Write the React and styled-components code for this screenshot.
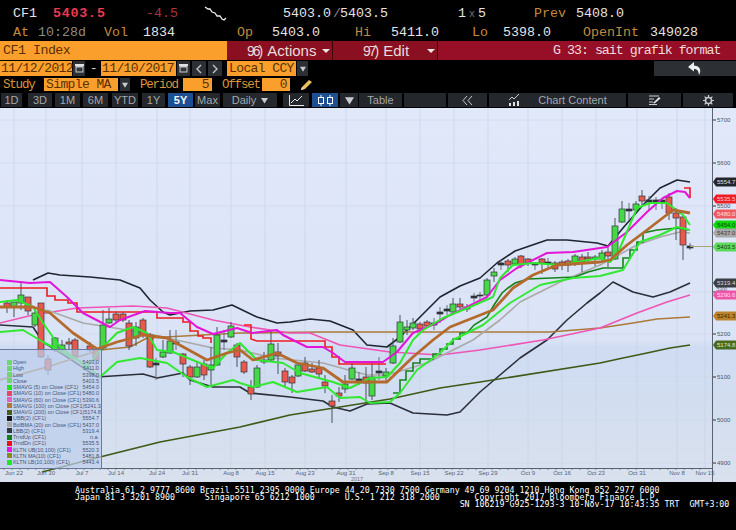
import React from 'react';
import styled, { createGlobalStyle } from 'styled-components';

const GlobalStyle = createGlobalStyle`
  html, body { margin: 0; padding: 0; background: #000; }
  body { width: 736px; height: 530px; overflow: hidden; font-family: "Liberation Mono", monospace; }
`;

const ORANGE = '#fb9f2c';

const Page = styled.div`
  width: 736px;
  height: 530px;
  display: flex;
  flex-direction: column;
  background: #000;
`;

const Row = styled.div`
  display: flex;
  align-items: center;
  box-sizing: border-box;
  height: ${p => p.$h}px;
  flex: none;
  padding-left: ${p => p.$pad || 0}px;
  padding-top: ${p => p.$top || 0}px;
  margin-bottom: ${p => p.$mb || 0}px;
`;

const Quote = styled.span`
  flex: none;
  width: ${p => p.$w}px;
  font-size: 13.3px;
  color: ${p => p.$c || '#e4e4e4'};
  font-weight: ${p => (p.$bold ? 700 : 400)};
  letter-spacing: ${p => p.$ls || 0}px;
  white-space: pre;
`;

const Times = styled.span`
  color: #777;
  font-size: 10px;
`;

const TitleBar = styled.div`
  flex: none;
  display: flex;
  align-items: center;
  width: ${p => p.$w}px;
  height: 19px;
  box-sizing: border-box;
  padding-left: ${p => p.$pad || 0}px;
  background: ${p => p.$bg};
  color: ${p => p.$c};
  font-size: 13.3px;
  letter-spacing: ${p => p.$ls || 0}px;
  white-space: pre;
  border-right: ${p => (p.$edge ? '1px solid #3a0008' : 'none')};
`;

const MenuNum = styled.span`
  font-family: "Liberation Sans", sans-serif;
  font-size: 14px;
  letter-spacing: -2px;
  color: #e8dcdc;
  margin-right: 6px;
`;

const MenuLabel = styled.span`
  font-family: "Liberation Sans", sans-serif;
  font-size: 15px;
  color: #e8dcdc;
`;

const Caret = styled.span`
  width: 0;
  height: 0;
  margin-left: ${p => p.$ml || 6}px;
  border-left: 4px solid transparent;
  border-right: 4px solid transparent;
  border-top: 4px solid ${p => p.$c || '#e8e8e8'};
`;

const Input = styled.div`
  flex: none;
  display: flex;
  align-items: center;
  justify-content: ${p => (p.$right ? 'flex-end' : 'flex-start')};
  box-sizing: border-box;
  width: ${p => p.$w}px;
  height: ${p => p.$h || 15}px;
  margin-left: ${p => p.$ml || 0}px;
  padding: 0 3px 0 ${p => p.$pl || 1}px;
  background: ${ORANGE};
  color: #5a3000;
  font-size: 13px;
  letter-spacing: -0.6px;
  white-space: pre;
`;

const Label = styled.span`
  flex: none;
  width: ${p => p.$w}px;
  margin-left: ${p => p.$ml || 0}px;
  color: ${p => p.$c || '#d9973a'};
  font-size: 12.5px;
  letter-spacing: -1.2px;
`;

const IconBtn = styled.div`
  flex: none;
  display: flex;
  align-items: center;
  justify-content: center;
  width: ${p => p.$w}px;
  height: ${p => p.$h || 15}px;
  margin-left: ${p => p.$ml || 0}px;
  background: #2c2f33;
  color: #cfd3d8;
`;

const Tool = styled.div`
  flex: none;
  display: flex;
  align-items: center;
  justify-content: center;
  gap: 5px;
  box-sizing: border-box;
  width: ${p => p.$w}px;
  height: 14px;
  margin-left: ${p => p.$ml || 0}px;
  background: ${p => (p.$on ? '#1d4f92' : '#24272b')};
  color: ${p => (p.$on ? '#f4f6fa' : '#a3a8ad')};
  font-family: "Liberation Sans", sans-serif;
  font-size: 11px;
  font-weight: ${p => (p.$on ? 700 : 400)};
`;

const ChartArea = styled.div`
  position: relative;
  flex: none;
  width: 736px;
  height: 374px;
  background: linear-gradient(180deg, #e0e8fa 0%, #dbe4f6 62%, #cfdcf3 64%, #d3deef 82%, #d9e1ee 100%);
  overflow: hidden;
`;

const Plot = styled.svg`
  display: block;
`;

const Legend = styled.div`
  position: absolute;
  left: 0;
  top: 241px;
  width: 102px;
  height: 120px;
  box-sizing: border-box;
  padding: 9px 2px 0 7px;
  background: rgba(190, 207, 236, 0.72);
  border: 1px solid #6a7a98;
  border-left: none;
`;

const LegendRow = styled.div`
  display: flex;
  align-items: center;
  height: 6.25px;
  font-family: "Liberation Sans", sans-serif;
  font-size: 5.4px;
  color: #44557a;
  white-space: pre;
`;

const Swatch = styled.span`
  flex: none;
  width: 5px;
  height: 5px;
  margin-right: 1px;
  background: ${p => p.$c};
`;

const LegendValue = styled.span`
  margin-left: auto;
`;

const Footer = styled.div`
  flex: 1;
  box-sizing: border-box;
  padding: 5px 0 0 75px;
  color: #fff;
  font-family: "DejaVu Sans Mono", monospace;
  font-size: 8.3px;
  line-height: 7px;
  white-space: pre;
`;

const pts = a => a.map(p => p.join(',')).join(' ');

const lines = [
  // upper band
  { c: '#1f2430', w: 1.6, p: [[33,280],[48,273],[60,275],[90,277],[120,280],[140,288],[150,300],[163,312],[170,315],[190,311],[213,310],[232,305],[257,317],[277,323],[290,322],[310,319],[330,321],[353,330],[367,345],[387,347],[400,337],[420,317],[440,297],[460,286],[480,278],[497,263],[515,251],[547,240],[567,240],[597,243],[608,246],[623,228],[643,205],[660,188],[677,180],[690,182]] },
  // lower band
  { c: '#2b2f3a', w: 1.6, p: [[0,325],[33,327],[43,342],[67,357],[97,377],[143,374],[157,378],[183,373],[190,380],[213,387],[240,387],[250,393],[290,397],[323,401],[333,407],[350,411],[367,404],[390,403],[413,413],[447,415],[460,412],[480,392],[500,375],[520,358],[547,340],[567,320],[587,303],[600,293],[613,282],[633,292],[653,297],[670,292],[690,283]] },
  // 200
  { c: '#3d5a16', w: 1.7, p: [[42,472],[100,457],[160,442],[240,427],[290,415],[340,407],[390,399],[440,388],[480,382],[600,363],[623,358],[647,353],[670,348],[690,345]] },
  // 100
  { c: '#ab7a3a', w: 1.7, p: [[0,380],[47,367],[100,350],[130,347],[147,338],[240,333],[320,332],[400,332],[500,332],[550,332],[600,328],[633,323],[657,319],[690,317]] },
  // 60
  { c: '#ee55b4', w: 1.7, p: [[0,323],[33,315],[77,308],[133,306],[167,308],[213,320],[250,327],[290,333],[310,333],[340,345],[390,352],[440,355],[480,350],[543,340],[600,328],[637,313],[667,302],[690,295]] },
  // middle band
  { c: '#aaa9a8', w: 1.6, p: [[47,310],[83,323],[140,332],[213,348],[240,350],[273,358],[323,363],[367,375],[387,375],[427,363],[473,340],[500,320],[520,302],[560,282],[600,265],[637,245],[660,237],[680,232],[690,233]] },
  // upper kltn
  { c: '#e414d8', w: 2, p: [[0,280],[30,283],[50,282],[67,297],[83,313],[110,327],[120,320],[145,311],[170,313],[180,313],[197,327],[213,334],[237,328],[252,333],[277,330],[283,335],[307,347],[323,347],[333,353],[345,362],[383,362],[397,352],[413,333],[437,323],[450,315],[467,307],[487,297],[500,280],[517,268],[547,253],[573,252],[607,247],[627,232],[647,212],[663,198],[677,191],[685,192],[690,198]] },
  // sma 5
  { c: '#2ee82e', w: 2, p: [[0,302],[17,300],[33,307],[43,323],[60,347],[87,367],[100,350],[117,333],[133,327],[147,333],[157,350],[173,352],[200,363],[213,368],[227,353],[240,343],[257,360],[283,363],[300,373],[333,382],[350,388],[370,378],[387,377],[400,363],[413,340],[423,330],[443,318],[470,307],[493,297],[500,278],[513,265],[533,263],[560,265],[600,258],[610,262],[617,255],[637,208],[650,203],[667,203],[683,215],[690,225]] },
  // lower kltn
  { c: '#32e832', w: 2, p: [[0,332],[23,330],[43,342],[83,363],[100,377],[117,362],[140,358],[167,363],[187,377],[207,387],[233,380],[240,383],[253,387],[273,382],[297,392],[327,387],[340,398],[360,397],[370,403],[390,402],[400,393],[417,370],[440,353],[453,340],[483,325],[510,303],[540,285],[573,278],[600,276],[623,270],[640,242],[660,235],[677,227],[690,230]] },
  // brown kltn mid
  { c: '#b46a2c', w: 2.8, p: [[0,307],[33,307],[50,313],[73,333],[97,349],[117,342],[143,335],[167,338],[207,360],[227,353],[240,350],[253,360],[277,353],[297,363],[323,368],[343,382],[387,382],[413,357],[433,340],[450,327],[493,310],[513,288],[533,275],[557,265],[600,262],[610,260],[627,245],[647,230],[673,210],[690,213]] },
];

const steps = [
  { c: '#14821c', w: 1.6, p: [[393,393],[400,393],[400,380],[406,380],[406,371],[413,371],[413,363],[420,363],[420,359],[433,359],[433,354],[440,354],[440,349],[447,349],[447,344],[453,344],[453,339],[460,339],[460,333],[467,333],[474,325],[487,317],[494,305],[502,293],[508,288],[515,283],[528,279],[575,277],[588,272],[603,268],[623,268],[623,258],[630,258],[630,250],[637,250],[637,242],[643,242],[643,233],[657,230],[677,228],[688,230]] },
  { c: '#ee1c20', w: 1.6, p: [[0,288],[47,288],[47,296],[55,296],[55,300],[68,300],[68,303],[77,303],[77,312],[157,312],[157,318],[183,318],[183,322],[190,322],[190,331],[198,331],[198,336],[203,336],[203,338],[211,338],[211,343]] },
  { c: '#ee1c20', w: 1.6, p: [[244,325],[251,325],[251,339],[257,341],[325,341],[325,347],[332,347],[332,357],[339,357],[339,364],[386,364]] },
  { c: '#ee1c20', w: 1.6, p: [[684,188],[690,188],[690,198]] },
];

// x, bodyTop, bodyBottom, wickTop, wickBottom, colour (r/g/t for a doji tick)
const candles = [
  [7,303,307,300,313,'r'],[14,302,307,302,317,'g'],[21,295,303,283,310,'g'],[28,297,311,297,315,'r'],[35,313,325,310,327,'g'],[41,303,357,303,358,'r'],
  [48,359,370,355,375,'r'],[55,338,350,337,352,'g'],[62,345,350,340,352,'g'],[69,342,344,338,350,'r'],[75,340,356,338,358,'r'],[90,346,350,342,352,'r'],
  [96,350,360,350,370,'r'],[103,325,348,310,350,'g'],[109,319,323,308,324,'g'],[116,314,320,312,322,'r'],[123,314,320,312,322,'r'],[129,323,346,320,350,'r'],
  [136,327,338,322,346,'g'],[143,320,335,318,338,'r'],[150,335,367,333,368,'r'],[156,363,365,358,380,'t'],[163,352,357,340,358,'g'],[170,341,353,330,354,'g'],
  [176,342,344,330,350,'t'],[183,354,364,353,377,'r'],[190,367,377,365,385,'r'],[197,367,377,362,378,'g'],[204,364,375,360,380,'r'],[211,365,370,347,387,'g'],
  [217,335,365,327,366,'g'],[224,340,342,330,350,'t'],[231,326,337,322,338,'g'],[237,345,357,343,367,'r'],[244,362,372,360,374,'r'],[251,387,394,380,400,'r'],
  [257,368,387,365,388,'g'],[264,360,362,352,364,'g'],[271,344,360,330,362,'g'],[278,352,356,343,374,'r'],[285,371,382,368,387,'r'],[292,377,383,375,393,'r'],
  [298,365,376,362,377,'g'],[305,363,371,357,372,'r'],[312,369,372,363,373,'r'],[319,368,374,360,378,'r'],[325,382,386,375,393,'r'],[332,401,406,395,423,'r'],
  [339,393,396,387,402,'r'],[345,384,389,375,393,'g'],[352,368,379,362,380,'g'],[359,379,381,372,385,'t'],[366,377,383,367,402,'r'],[372,377,396,363,400,'g'],
  [379,371,373,357,380,'t'],[386,372,376,368,383,'g'],[393,346,363,338,364,'g'],[400,322,342,315,343,'g'],[407,327,330,320,335,'g'],[413,323,328,318,330,'g'],
  [420,324,329,322,331,'r'],[427,322,326,320,328,'r'],[434,323,325,318,330,'t'],[440,312,314,307,323,'t'],[447,309,311,305,315,'t'],[453,304,312,298,313,'g'],
  [460,304,307,298,309,'r'],[467,307,309,304,312,'g'],[474,296,298,293,302,'t'],[480,295,296,292,300,'t'],[487,280,295,278,296,'g'],[494,272,276,268,282,'g'],
  [501,263,265,260,270,'t'],[508,261,265,259,272,'r'],[515,259,264,257,266,'g'],[521,256,265,255,268,'r'],[528,259,263,258,266,'r'],[535,263,265,262,270,'t'],
  [542,259,263,258,274,'r'],[548,262,264,258,270,'t'],[555,263,269,261,272,'r'],[562,262,265,260,270,'r'],[568,261,265,259,272,'r'],[575,256,263,254,266,'g'],
  [582,257,262,254,272,'r'],[588,257,259,252,264,'r'],[595,257,259,255,266,'g'],[602,253,259,250,262,'g'],[608,252,256,247,267,'r'],[615,226,259,218,260,'g'],
  [622,209,222,201,223,'g'],[629,209,211,203,220,'t'],[636,204,210,201,211,'g'],[642,196,201,190,205,'r'],[649,200,202,196,210,'t'],[656,200,202,197,210,'t'],
  [662,200,202,199,209,'t'],[669,197,213,193,220,'r'],[676,213,218,208,240,'r'],[683,217,245,216,260,'r'],[690,246,248,243,250,'t'],
];

const candleFill = { r: '#e8584c', g: '#46d846', t: '#2a2e38' };

const ticks = [
  ['Jun 22',14],['Jun 30',46],['Jul 7',82],['Jul 14',116],['Jul 24',157],['Jul 31',190],['Aug 8',231],['Aug 15',265],['Aug 23',305],['Aug 31',346],
  ['Sep 8',386],['Sep 15',420],['Sep 22',454],['Sep 29',488],['Oct 9',528],['Oct 16',562],['Oct 23',596],['Oct 31',637],['Nov 8',677],['Nov 15',705],
];

const levels = [[5700,120,120],[5600,163,163],[5500,206,206],[5300,292,288.5],[5200,334,334],[5100,377,377],[5000,420,420],[4900,463,463]];

const tags = [
  ['5554.7',182,'#23262c','#e0e0e0'],['5535.5',199,'#f01c24','#ffd0d0'],['5480.0',214,'#ee5a60','#ffe0e0'],['5454.0',225,'#10d810','#0c4a0c'],
  ['5437.0',233,'#a8a8a8','#3a3a3a'],['5403.5',247,'#5cd85c','#123c12'],['5319.4',283,'#3a3e44','#d8d8d8'],['5290.6',295,'#ee55a8','#ffe0f0'],
  ['5241.3',316,'#b9832e','#3c2600'],['5174.8',345,'#4a6a1c','#e0e8c0'],
];

const legendRows = [
  ['#6ad86a','Open','5403.0'],['#6ad86a','High','5411.0'],['#6ad86a','Low','5398.0'],['#6ad86a','Close','5403.5'],
  ['#18e818','SMAVG (5) on Close (CF1)','5454.0'],['#ee4460','SMAVG (10) on Close (CF1)','5480.0'],['#e060c0','SMAVG (60) on Close (CF1)','5390.6'],
  ['#b07a30','SMAVG (100) on Close (CF1)','5241.3'],['#4a5a18','SMAVG (200) on Close (CF1)','5174.8'],['#14161c','UBB(2) (CF1)','5554.7'],
  ['#a8a8a8','BolBMA (20) on Close (CF1)','5437.0'],['#343840','LBB(2) (CF1)','5319.4'],['#14801c','TrndUp (CF1)','n.a.'],
  ['#ee1010','TrndDn (CF1)','5535.5'],['#f010e8','KLTN UB(10,100) (CF1)','5520.3'],['#8a8a20','KLTN MA(10) (CF1)','5481.8'],['#20e820','KLTN LB(10,100) (CF1)','5443.4'],
];

const Calendar = () => (
  <svg width="9" height="9" viewBox="0 0 9 9">
    <rect x="0.5" y="1.5" width="8" height="7" fill="#c8ccd0" />
    <rect x="1.5" y="3.5" width="6" height="4" fill="#33373b" />
    <rect x="0" y="0" width="9" height="2" fill="#e0e2e4" />
  </svg>
);

const Tri = ({ c = '#c8ccd2', s = 8 }) => (
  <svg width={s} height={s} viewBox="0 0 8 8"><path d="M0 1h8L4 7.5z" fill={c} /></svg>
);

const Chev = ({ d }) => (
  <svg width="8" height="10" viewBox="0 0 8 10">
    <path d={d} fill="none" stroke="#c0c4c8" strokeWidth="1.4" />
  </svg>
);

const Quotes = () => (
  <>
    <Row $h={23} $pad={13} $top={3}>
      <Quote $w={40}>CF1</Quote>
      <Quote $w={93} $c="#ec3a52" $bold $ls={0.8}>5403.5</Quote>
      <Quote $w={57} $c="#a8343e">-4.5</Quote>
      <Quote $w={80}>
        <svg width="24" height="16" viewBox="203 3 24 16" style={{ display: 'block' }}>
          <polyline points="205,5 208,7 210,7 212,10 215,11 217,14 220,14 222,17 224,18 226,16" fill="none" stroke="#eee" strokeWidth="1.3" />
        </svg>
      </Quote>
      <Quote $w={50}>5403.0</Quote>
      <Quote $w={7} $c="#888">/</Quote>
      <Quote $w={118}>5403.5</Quote>
      <Quote $w={76} $ls={3}>1<Times>x</Times>5</Quote>
      <Quote $w={42} $c="#c48a3c">Prev</Quote>
      <Quote $w={60}>5408.0</Quote>
    </Row>
    <Row $h={18} $pad={13}>
      <Quote $w={25} $c="#c48a3c">At</Quote>
      <Quote $w={66} $c="#8a8a8a">10:28d</Quote>
      <Quote $w={39} $c="#c48a3c">Vol</Quote>
      <Quote $w={94}>1834</Quote>
      <Quote $w={35} $c="#c48a3c">Op</Quote>
      <Quote $w={83}>5403.0</Quote>
      <Quote $w={36} $c="#c48a3c">Hi</Quote>
      <Quote $w={81}>5411.0</Quote>
      <Quote $w={31} $c="#c48a3c">Lo</Quote>
      <Quote $w={80}>5398.0</Quote>
      <Quote $w={67} $c="#c48a3c">OpenInt</Quote>
      <Quote $w={60}>349028</Quote>
    </Row>
  </>
);

const Controls = () => (
  <>
    <Row $h={19} $mb={1}>
      <TitleBar $w={227} $pad={3} $bg={ORANGE} $c="#5a3000" $ls={-0.5}>CF1 Index</TitleBar>
      <TitleBar $w={106} $pad={20} $bg="#8a0f20" $c="#e8dcdc" $edge>
        <MenuNum>96)</MenuNum><MenuLabel>Actions</MenuLabel><Caret />
      </TitleBar>
      <TitleBar $w={105} $pad={30} $bg="#8a0f20" $c="#e8dcdc" $edge>
        <MenuNum>97)</MenuNum><MenuLabel>Edit</MenuLabel><Caret $ml={18} />
      </TitleBar>
      <TitleBar $w={298} $pad={115} $bg="#960f26" $c="#f0d8dc" $ls={-1}>G 33: sait grafik format</TitleBar>
    </Row>
    <Row $h={15} $mb={2}>
      <Input $w={72}>11/12/2012</Input>
      <IconBtn $w={12} $ml={1}><Calendar /></IconBtn>
      <Label $w={11} $ml={5} $c="#d8d8d8">-</Label>
      <Input $w={75}>11/10/2017</Input>
      <IconBtn $w={13} $ml={1}><Calendar /></IconBtn>
      <IconBtn $w={14} $ml={2}><Chev d="M6 1L2 5l4 4" /></IconBtn>
      <IconBtn $w={14} $ml={2}><Chev d="M2 1l4 4-4 4" /></IconBtn>
      <Input $w={69} $ml={5} $pl={2}>Local CCY</Input>
      <IconBtn $w={11} $ml={1}><Tri s={6} /></IconBtn>
      <IconBtn $w={82} $ml={346}>
        <svg width="14" height="13" viewBox="0 0 14 13">
          <path d="M6 0L0 5l6 4.500V7c3 0 4.500 1.500 5 6 2-3 2.500-9-5-9.500z" fill="#eceef0" />
        </svg>
      </IconBtn>
    </Row>
    <Row $h={13} $mb={2}>
      <Label $w={41} $ml={3}>Study</Label>
      <Input $w={74} $h={13} $pl={2}>Simple MA</Input>
      <IconBtn $w={10} $h={13} $ml={2}><Tri s={6} /></IconBtn>
      <Label $w={43} $ml={10}>Period</Label>
      <Input $w={29} $h={13} $right>5</Input>
      <Label $w={40} $ml={10}>Offset</Label>
      <Input $w={28} $h={13} $right>0</Input>
      <svg width="14" height="12" viewBox="0 0 14 12" style={{ marginLeft: 10 }}>
        <path d="M1 11l1-3 7-7 3 2-7 7z" fill="#e8c060" />
        <path d="M1 11l1-3 2 2z" fill="#f0e0c0" />
      </svg>
    </Row>
    <Row $h={14} $mb={1}>
      <Tool $w={21} $ml={1}>1D</Tool>
      <Tool $w={24} $ml={6}>3D</Tool>
      <Tool $w={25} $ml={3}>1M</Tool>
      <Tool $w={25} $ml={3}>6M</Tool>
      <Tool $w={26} $ml={4}>YTD</Tool>
      <Tool $w={23} $ml={4}>1Y</Tool>
      <Tool $w={25} $ml={3} $on>5Y</Tool>
      <Tool $w={25} $ml={2}>Max</Tool>
      <Tool $w={54} $ml={3}>Daily <Tri s={7} /></Tool>
      <Tool $w={26} $ml={6}>
        <svg width="15" height="11" viewBox="0 0 15 11">
          <path d="M0.500 0v10.500H15" fill="none" stroke="#e8e8e8" />
          <path d="M2 8l4-4 2 2 5-5" fill="none" stroke="#e8e8e8" />
        </svg>
      </Tool>
      <Tool $w={26} $ml={3} $on>
        <svg width="17" height="11" viewBox="0 0 17 11">
          <path d="M4 0v11M13 0v11" stroke="#fff" />
          <rect x="1.500" y="2.500" width="5" height="6" fill="#1d4f92" stroke="#fff" />
          <rect x="10.500" y="2.500" width="5" height="6" fill="#1d4f92" stroke="#fff" />
        </svg>
      </Tool>
      <Tool $w={18} $ml={2}><Tri s={9} /></Tool>
      <Tool $w={43} $ml={1}>Table</Tool>
      <Tool $w={42} $ml={2} />
      <Tool $w={39} $ml={2}>
        <svg width="11" height="9" viewBox="0 0 11 9">
          <path d="M5 0L1 4.500 5 9M10 0L6 4.500 10 9" fill="none" stroke="#c8ccd0" />
        </svg>
      </Tool>
      <Tool $w={137} $ml={2}>
        <svg width="13" height="12" viewBox="0 0 13 12" style={{ marginRight: 12 }}>
          <path d="M1 6l3-3 2 2 5-5" fill="none" stroke="#c8ccd0" />
          <path d="M1 9h2v3H1zM5 8h2v4H5zM9 7h2v5H9z" fill="#e0e0e0" />
        </svg>
        Chart Content
      </Tool>
      <Tool $w={53} $ml={2}>
        <svg width="12" height="10" viewBox="0 0 12 10">
          <path d="M0 1h10M0 4h5M0 7h4M0 9.500h8" stroke="#c8ccd0" />
          <path d="M4 8l6-6 1.500 1.500-6 5z" fill="#e8e8e8" />
        </svg>
      </Tool>
      <Tool $w={50} $ml={2}>
        <svg width="11" height="11" viewBox="0 0 11 11">
          <circle cx="5.500" cy="5.500" r="3" fill="none" stroke="#c8ccd0" strokeWidth="1.600" />
          <path d="M5.500 0v2M5.500 9v2M0 5.500h2M9 5.500h2M1.600 1.600l1.400 1.400M8 8l1.400 1.400M9.400 1.600L8 3M3 8L1.600 9.400" stroke="#c8ccd0" strokeWidth="1.200" />
        </svg>
      </Tool>
    </Row>
  </>
);

const Chart = () => (
  <Plot width="736" height="374" viewBox="0 108 736 374">
    {ticks.map(([, x]) => <line key={x} x1={x} x2={x} y1="108" y2="468" stroke="#c6d0e4" strokeWidth="0.6" />)}
    {levels.map(([v, y]) => <line key={v} x1="0" x2="712" y1={y} y2={y} stroke="#ccd6ea" strokeWidth="0.6" />)}

    {lines.slice(0, 6).map((l, i) => (
      <polyline key={i} points={pts(l.p)} fill="none" stroke={l.c} strokeWidth={l.w} strokeLinejoin="round" />
    ))}
    {candles.map(([x, t, b, wt, wb, k]) => (
      <g key={x}>
        <line x1={x} x2={x} y1={wt} y2={wb} stroke={k === 't' ? '#6a7078' : '#4a505a'} strokeWidth="1" />
        <rect x={x - 3} y={t} width="6" height={b - t} fill={candleFill[k]} stroke="#33373c" strokeWidth="0.7" />
      </g>
    ))}
    {steps.map((l, i) => (
      <polyline key={i} points={pts(l.p)} fill="none" stroke={l.c} strokeWidth={l.w} />
    ))}
    {lines.slice(6).map((l, i) => (
      <polyline key={i} points={pts(l.p)} fill="none" stroke={l.c} strokeWidth={l.w} strokeLinejoin="round" />
    ))}
    <line x1="690" x2="712" y1="246.500" y2="246.500" stroke="#a8a878" />

    <path d="M0 468.500H712M712.500 108V482" fill="none" stroke="#5a6270" />
    {Array.from({ length: 88 }, (_, i) => (
      <line key={i} x1={i * 8 + 4} x2={i * 8 + 4} y1="468" y2="470" stroke="#5a6270" strokeWidth="0.7" />
    ))}
    {ticks.map(([label, x]) => (
      <text key={label} x={x} y="475" fontSize="6" fill="#55607a" textAnchor="middle" fontFamily="Liberation Sans, sans-serif">{label}</text>
    ))}
    <text x="357" y="481" fontSize="5.500" fill="#6a7488" textAnchor="middle" fontFamily="Liberation Sans, sans-serif">2017</text>

    {levels.map(([v, y, ly]) => (
      <g key={v}>
        <line x1="713" x2="716" y1={y} y2={y} stroke="#333" />
        <text x="717" y={ly + 2} fontSize={v === 5300 ? 4.5 : 6} fill="#4a5468" fontFamily="Liberation Sans, sans-serif">{v}</text>
      </g>
    ))}
    {tags.map(([v, y, bg, fg]) => (
      <g key={v}>
        <path d={`M713 ${y}l3 -4.500H736V${y + 4.500}H716z`} fill={bg} />
        <text x="717" y={y + 2} fontSize="6" fill={fg} fontFamily="Liberation Sans, sans-serif">{v}</text>
      </g>
    ))}
  </Plot>
);

export default function App() {
  return (
    <Page>
      <GlobalStyle />
      <Quotes />
      <Controls />
      <ChartArea>
        <Chart />
        <Legend>
          {legendRows.map(([c, name, val]) => (
            <LegendRow key={name}>
              <Swatch $c={c} />{name}<LegendValue>{val}</LegendValue>
            </LegendRow>
          ))}
        </Legend>
      </ChartArea>
      <Footer>{`Australia 61 2 9777 8600 Brazil 5511 2395 9000 Europe 44 20 7330 7500 Germany 49 69 9204 1210 Hong Kong 852 2977 6000
Japan 81 3 3201 8900      Singapore 65 6212 1000      U.S. 1 212 318 2000       Copyright 2017 Bloomberg Finance L.P.
${' '.repeat(77)}SN 106219 G925-1293-3 10-Nov-17 10:43:35 TRT  GMT+3:00`}</Footer>
    </Page>
  );
}
